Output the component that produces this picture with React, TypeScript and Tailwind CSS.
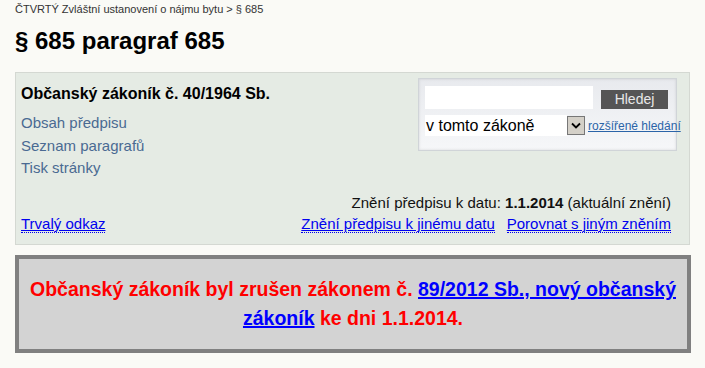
import React from "react";

export default function App() {
  const linkCls =
    "text-[#0000ee] underline border-b border-dotted border-[#0000ee] leading-[16px] whitespace-nowrap";
  return (
    <div className="min-h-screen w-[705px] bg-[#fafaf6] font-['Liberation_Sans',Arial,sans-serif] text-black">
      <div className="px-[15px] pt-[3px]">
        <div className="text-[11px] leading-[13px] text-[#333]">
          ČTVRTÝ Zvláštní ustanovení o nájmu bytu &gt; § 685
        </div>
        <h1 className="mt-[11px] text-[24px] font-bold leading-[28px]">§ 685 paragraf 685</h1>

        <div className="mt-[17px] h-[173px] border border-[#d4d8d2] bg-[#e5ebe4] flex flex-col">
          <div className="flex justify-between">
            <div className="pl-[5px] pt-[12px]">
              <div className="text-[16px] font-bold leading-[18px]">Občanský zákoník č. 40/1964 Sb.</div>
              <div className="mt-[9px] flex flex-col text-[15px] leading-[22.5px] text-[#4a6a92]">
                <span>Obsah předpisu</span>
                <span>Seznam paragrafů</span>
                <span>Tisk stránky</span>
              </div>
            </div>
            <div className="mr-[12px] mt-[5px] w-[259px] h-[73px] shrink-0 border border-[#d0d4d8] bg-gradient-to-b from-[#e8eaee] to-[#f6f7f9] shadow-[inset_0_0_3px_rgba(0,0,0,0.12)] pl-[6px] pt-[7px]">
              <div className="flex items-end">
                <div className="w-[168px] h-[23px] shrink-0 bg-white" />
                <div className="ml-[8px] w-[67px] h-[19px] shrink-0 bg-[#555555] text-[#e8e8e8] text-[14px] leading-[19px] text-center">
                  Hledej
                </div>
              </div>
              <div className="mt-[6px] flex items-center">
                <div className="w-[142px] h-[21px] shrink-0 bg-white text-[16px] leading-[21px] pl-[1px]">v tomto zákoně</div>
                <div className="w-[18px] h-[19px] shrink-0 border border-[#777] bg-[#d4d0c8] flex items-center justify-center">
                  <svg width="10" height="7" viewBox="0 0 10 7">
                    <path d="M1 1.5 L5 5.5 L9 1.5" stroke="#000" strokeWidth="1.8" fill="none" />
                  </svg>
                </div>
                <span className="ml-[3px] shrink-0 whitespace-nowrap text-[12px] leading-[14px] text-[#2b64a8] underline">
                  rozšířené hledání
                </span>
              </div>
            </div>
          </div>
          <div className="mt-auto pb-[11px] px-[5px]">
            <div className="text-right pr-[13px] text-[15px] leading-[18px] text-[#111]">
              Znění předpisu k datu: <b>1.1.2014</b> (aktuální znění)
            </div>
            <div className="mt-[4px] flex text-[15px]">
              <span className={linkCls}>Trvalý odkaz</span>
              <span className={"ml-auto " + linkCls}>Znění předpisu k jinému datu</span>
              <span className={"ml-[12px] mr-[13px] " + linkCls}>Porovnat s jiným zněním</span>
            </div>
          </div>
        </div>

        <div className="mt-[10px] h-[98px] w-[676px] border-[4px] border-[#808080] bg-[#d3d3d3] flex items-center justify-center px-[8px]">
          <p className="text-center text-[19.5px] font-bold leading-[29px] text-[#ff0000]">
            Občanský zákoník byl zrušen zákonem č.{" "}
            <span className="text-[#0000ff] underline decoration-2">89/2012 Sb., nový občanský zákoník</span> ke dni
            1.1.2014.
          </p>
        </div>
      </div>
    </div>
  );
}
